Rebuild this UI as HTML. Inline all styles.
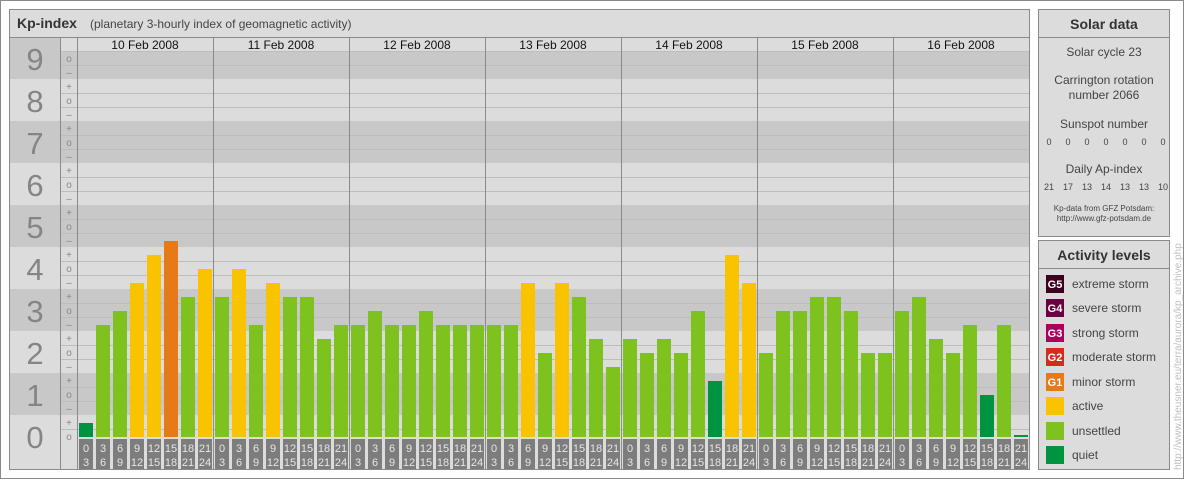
<!DOCTYPE html>
<html><head><meta charset="utf-8"><style>
html,body{margin:0;padding:0;background:#fff;}
svg{display:block;font-family:"Liberation Sans",sans-serif;}
</style></head><body>
<svg width="1184" height="480" viewBox="0 0 1184 480" xmlns="http://www.w3.org/2000/svg">
<rect x="0.5" y="0.5" width="1183" height="478" fill="#fff" stroke="#8a8a8a"/>
<rect x="9.5" y="9.5" width="1020" height="460" fill="#dcdcdc" stroke="#8a8a8a"/>
<line x1="10" y1="37.5" x2="1029" y2="37.5" stroke="#8a8a8a"/>
<text x="17" y="28" font-size="14" font-weight="bold" fill="#333">Kp-index</text>
<text x="90" y="28" font-size="12" fill="#444">(planetary 3-hourly index of geomagnetic activity)</text>
<g fill="#c8c8c8">
<rect x="10" y="38" width="50" height="41"/>
<rect x="60" y="51" width="969" height="28"/>
<rect x="10" y="121" width="1019" height="42"/>
<rect x="10" y="205" width="1019" height="42"/>
<rect x="10" y="289" width="1019" height="42"/>
<rect x="10" y="373" width="1019" height="42"/>
</g>
<g stroke="#bdbdbd" stroke-width="1">
<line x1="60" y1="51.5" x2="1029" y2="51.5"/>
<line x1="60" y1="65.5" x2="1029" y2="65.5"/>
<line x1="60" y1="93.5" x2="1029" y2="93.5"/>
<line x1="60" y1="107.5" x2="1029" y2="107.5"/>
<line x1="60" y1="135.5" x2="1029" y2="135.5"/>
<line x1="60" y1="149.5" x2="1029" y2="149.5"/>
<line x1="60" y1="177.5" x2="1029" y2="177.5"/>
<line x1="60" y1="191.5" x2="1029" y2="191.5"/>
<line x1="60" y1="219.5" x2="1029" y2="219.5"/>
<line x1="60" y1="233.5" x2="1029" y2="233.5"/>
<line x1="60" y1="261.5" x2="1029" y2="261.5"/>
<line x1="60" y1="275.5" x2="1029" y2="275.5"/>
<line x1="60" y1="303.5" x2="1029" y2="303.5"/>
<line x1="60" y1="317.5" x2="1029" y2="317.5"/>
<line x1="60" y1="345.5" x2="1029" y2="345.5"/>
<line x1="60" y1="359.5" x2="1029" y2="359.5"/>
<line x1="60" y1="387.5" x2="1029" y2="387.5"/>
<line x1="60" y1="401.5" x2="1029" y2="401.5"/>
<line x1="60" y1="429.5" x2="1029" y2="429.5"/>
</g>
<g stroke="#8a8a8a">
<line x1="60.5" y1="37" x2="60.5" y2="470"/>
<line x1="77.5" y1="37" x2="77.5" y2="470"/>
<line x1="213.5" y1="37" x2="213.5" y2="470"/>
<line x1="349.5" y1="37" x2="349.5" y2="470"/>
<line x1="485.5" y1="37" x2="485.5" y2="470"/>
<line x1="621.5" y1="37" x2="621.5" y2="470"/>
<line x1="757.5" y1="37" x2="757.5" y2="470"/>
<line x1="893.5" y1="37" x2="893.5" y2="470"/>
</g>
<g font-size="31" fill="#858585" text-anchor="middle">
<text x="35" y="70">9</text><text x="35" y="112">8</text><text x="35" y="154">7</text>
<text x="35" y="196">6</text><text x="35" y="238">5</text><text x="35" y="280">4</text>
<text x="35" y="322">3</text><text x="35" y="364">2</text><text x="35" y="406">1</text>
<text x="35" y="448">0</text>
</g>
<g font-size="10" fill="#888" text-anchor="middle">
<text x="69" y="62">o</text><text x="69" y="76">–</text>
<text x="69" y="90">+</text><text x="69" y="104">o</text><text x="69" y="118">–</text>
<text x="69" y="132">+</text><text x="69" y="146">o</text><text x="69" y="160">–</text>
<text x="69" y="174">+</text><text x="69" y="188">o</text><text x="69" y="202">–</text>
<text x="69" y="216">+</text><text x="69" y="230">o</text><text x="69" y="244">–</text>
<text x="69" y="258">+</text><text x="69" y="272">o</text><text x="69" y="286">–</text>
<text x="69" y="300">+</text><text x="69" y="314">o</text><text x="69" y="328">–</text>
<text x="69" y="342">+</text><text x="69" y="356">o</text><text x="69" y="370">–</text>
<text x="69" y="384">+</text><text x="69" y="398">o</text><text x="69" y="412">–</text>
<text x="69" y="426">+</text><text x="69" y="440">o</text>
</g>
<g font-size="12" fill="#111" text-anchor="middle">
<text x="145" y="49">10 Feb 2008</text><text x="281" y="49">11 Feb 2008</text>
<text x="417" y="49">12 Feb 2008</text><text x="553" y="49">13 Feb 2008</text>
<text x="689" y="49">14 Feb 2008</text><text x="825" y="49">15 Feb 2008</text>
<text x="961" y="49">16 Feb 2008</text>
</g>
<g>
<rect x="79" y="423" width="14" height="14" fill="#009440"/>
<rect x="96" y="325" width="14" height="112" fill="#7dc21e"/>
<rect x="113" y="311" width="14" height="126" fill="#7dc21e"/>
<rect x="130" y="283" width="14" height="154" fill="#f9c300"/>
<rect x="147" y="255" width="14" height="182" fill="#f9c300"/>
<rect x="164" y="241" width="14" height="196" fill="#e57a17"/>
<rect x="181" y="297" width="14" height="140" fill="#7dc21e"/>
<rect x="198" y="269" width="14" height="168" fill="#f9c300"/>
<rect x="215" y="297" width="14" height="140" fill="#7dc21e"/>
<rect x="232" y="269" width="14" height="168" fill="#f9c300"/>
<rect x="249" y="325" width="14" height="112" fill="#7dc21e"/>
<rect x="266" y="283" width="14" height="154" fill="#f9c300"/>
<rect x="283" y="297" width="14" height="140" fill="#7dc21e"/>
<rect x="300" y="297" width="14" height="140" fill="#7dc21e"/>
<rect x="317" y="339" width="14" height="98" fill="#7dc21e"/>
<rect x="334" y="325" width="14" height="112" fill="#7dc21e"/>
<rect x="351" y="325" width="14" height="112" fill="#7dc21e"/>
<rect x="368" y="311" width="14" height="126" fill="#7dc21e"/>
<rect x="385" y="325" width="14" height="112" fill="#7dc21e"/>
<rect x="402" y="325" width="14" height="112" fill="#7dc21e"/>
<rect x="419" y="311" width="14" height="126" fill="#7dc21e"/>
<rect x="436" y="325" width="14" height="112" fill="#7dc21e"/>
<rect x="453" y="325" width="14" height="112" fill="#7dc21e"/>
<rect x="470" y="325" width="14" height="112" fill="#7dc21e"/>
<rect x="487" y="325" width="14" height="112" fill="#7dc21e"/>
<rect x="504" y="325" width="14" height="112" fill="#7dc21e"/>
<rect x="521" y="283" width="14" height="154" fill="#f9c300"/>
<rect x="538" y="353" width="14" height="84" fill="#7dc21e"/>
<rect x="555" y="283" width="14" height="154" fill="#f9c300"/>
<rect x="572" y="297" width="14" height="140" fill="#7dc21e"/>
<rect x="589" y="339" width="14" height="98" fill="#7dc21e"/>
<rect x="606" y="367" width="14" height="70" fill="#7dc21e"/>
<rect x="623" y="339" width="14" height="98" fill="#7dc21e"/>
<rect x="640" y="353" width="14" height="84" fill="#7dc21e"/>
<rect x="657" y="339" width="14" height="98" fill="#7dc21e"/>
<rect x="674" y="353" width="14" height="84" fill="#7dc21e"/>
<rect x="691" y="311" width="14" height="126" fill="#7dc21e"/>
<rect x="708" y="381" width="14" height="56" fill="#009440"/>
<rect x="725" y="255" width="14" height="182" fill="#f9c300"/>
<rect x="742" y="283" width="14" height="154" fill="#f9c300"/>
<rect x="759" y="353" width="14" height="84" fill="#7dc21e"/>
<rect x="776" y="311" width="14" height="126" fill="#7dc21e"/>
<rect x="793" y="311" width="14" height="126" fill="#7dc21e"/>
<rect x="810" y="297" width="14" height="140" fill="#7dc21e"/>
<rect x="827" y="297" width="14" height="140" fill="#7dc21e"/>
<rect x="844" y="311" width="14" height="126" fill="#7dc21e"/>
<rect x="861" y="353" width="14" height="84" fill="#7dc21e"/>
<rect x="878" y="353" width="14" height="84" fill="#7dc21e"/>
<rect x="895" y="311" width="14" height="126" fill="#7dc21e"/>
<rect x="912" y="297" width="14" height="140" fill="#7dc21e"/>
<rect x="929" y="339" width="14" height="98" fill="#7dc21e"/>
<rect x="946" y="353" width="14" height="84" fill="#7dc21e"/>
<rect x="963" y="325" width="14" height="112" fill="#7dc21e"/>
<rect x="980" y="395" width="14" height="42" fill="#009440"/>
<rect x="997" y="325" width="14" height="112" fill="#7dc21e"/>
<rect x="1014" y="435" width="14" height="2" fill="#009440"/>
</g>
<defs>
<g id="lbl" font-size="11" fill="#e6e6e6" text-anchor="middle">
<rect x="2" y="439" width="14" height="30" fill="#7d7d7d"/>
<text x="9" y="452">0</text><text x="9" y="466">3</text>
<rect x="19" y="439" width="14" height="30" fill="#7d7d7d"/>
<text x="26" y="452">3</text><text x="26" y="466">6</text>
<rect x="36" y="439" width="14" height="30" fill="#7d7d7d"/>
<text x="43" y="452">6</text><text x="43" y="466">9</text>
<rect x="53" y="439" width="14" height="30" fill="#7d7d7d"/>
<text x="60" y="452">9</text><text x="60" y="466">12</text>
<rect x="70" y="439" width="14" height="30" fill="#7d7d7d"/>
<text x="77" y="452">12</text><text x="77" y="466">15</text>
<rect x="87" y="439" width="14" height="30" fill="#7d7d7d"/>
<text x="94" y="452">15</text><text x="94" y="466">18</text>
<rect x="104" y="439" width="14" height="30" fill="#7d7d7d"/>
<text x="111" y="452">18</text><text x="111" y="466">21</text>
<rect x="121" y="439" width="14" height="30" fill="#7d7d7d"/>
<text x="128" y="452">21</text><text x="128" y="466">24</text>
</g>
</defs>
<use href="#lbl" x="77"/><use href="#lbl" x="213"/><use href="#lbl" x="349"/>
<use href="#lbl" x="485"/><use href="#lbl" x="621"/><use href="#lbl" x="757"/>
<use href="#lbl" x="893"/>

<rect x="1038.5" y="9.5" width="131" height="227" fill="#dcdcdc" stroke="#8a8a8a"/>
<line x1="1039" y1="37.5" x2="1170" y2="37.5" stroke="#8a8a8a"/>
<g text-anchor="middle" fill="#444">
<text x="1104" y="29" font-size="14" font-weight="bold" fill="#333">Solar data</text>
<text x="1104" y="56" font-size="12">Solar cycle 23</text>
<text x="1104" y="84" font-size="12">Carrington rotation</text>
<text x="1104" y="99" font-size="12">number 2066</text>
<text x="1104" y="128" font-size="12">Sunspot number</text>
<g font-size="9">
<text x="1049" y="145">0</text><text x="1068" y="145">0</text><text x="1087" y="145">0</text>
<text x="1106" y="145">0</text><text x="1125" y="145">0</text><text x="1144" y="145">0</text>
<text x="1163" y="145">0</text>
</g>
<text x="1104" y="173" font-size="12">Daily Ap-index</text>
<g font-size="9">
<text x="1049" y="190">21</text><text x="1068" y="190">17</text><text x="1087" y="190">13</text>
<text x="1106" y="190">14</text><text x="1125" y="190">13</text><text x="1144" y="190">13</text>
<text x="1163" y="190">10</text>
</g>
<text x="1104" y="211" font-size="8">Kp-data from GFZ Potsdam:</text>
<text x="1104" y="221" font-size="8">http://www.gfz-potsdam.de</text>
</g>
<rect x="1038.5" y="240.5" width="131" height="229" fill="#dcdcdc" stroke="#8a8a8a"/>
<line x1="1039" y1="268.5" x2="1170" y2="268.5" stroke="#8a8a8a"/>
<text x="1104" y="260" font-size="14" font-weight="bold" fill="#333" text-anchor="middle">Activity levels</text>
<g font-size="12" fill="#444">
<rect x="1046" y="275" width="18" height="18" fill="#3d0020"/><text x="1072" y="288">extreme storm</text>
<rect x="1046" y="299" width="18" height="18" fill="#6b0040"/><text x="1072" y="312">severe storm</text>
<rect x="1046" y="324" width="18" height="18" fill="#a8005c"/><text x="1072" y="337">strong storm</text>
<rect x="1046" y="348" width="18" height="18" fill="#d52b1e"/><text x="1072" y="361">moderate storm</text>
<rect x="1046" y="373" width="18" height="18" fill="#e57a17"/><text x="1072" y="386">minor storm</text>
<rect x="1046" y="397" width="18" height="18" fill="#f9c300"/><text x="1072" y="410">active</text>
<rect x="1046" y="422" width="18" height="18" fill="#7dc21e"/><text x="1072" y="435">unsettled</text>
<rect x="1046" y="446" width="18" height="18" fill="#009440"/><text x="1072" y="459">quiet</text>
</g>
<g font-size="11" fill="#fff" font-weight="bold" text-anchor="middle">
<text x="1055" y="288">G5</text><text x="1055" y="312">G4</text><text x="1055" y="337">G3</text>
<text x="1055" y="361">G2</text><text x="1055" y="386">G1</text>
</g>
<text transform="translate(1181,470) rotate(-90)" font-size="10" fill="#c0c0c0">http://www.theusner.eu/terra/aurora/kp_archive.php</text>
</svg>
</body></html>
